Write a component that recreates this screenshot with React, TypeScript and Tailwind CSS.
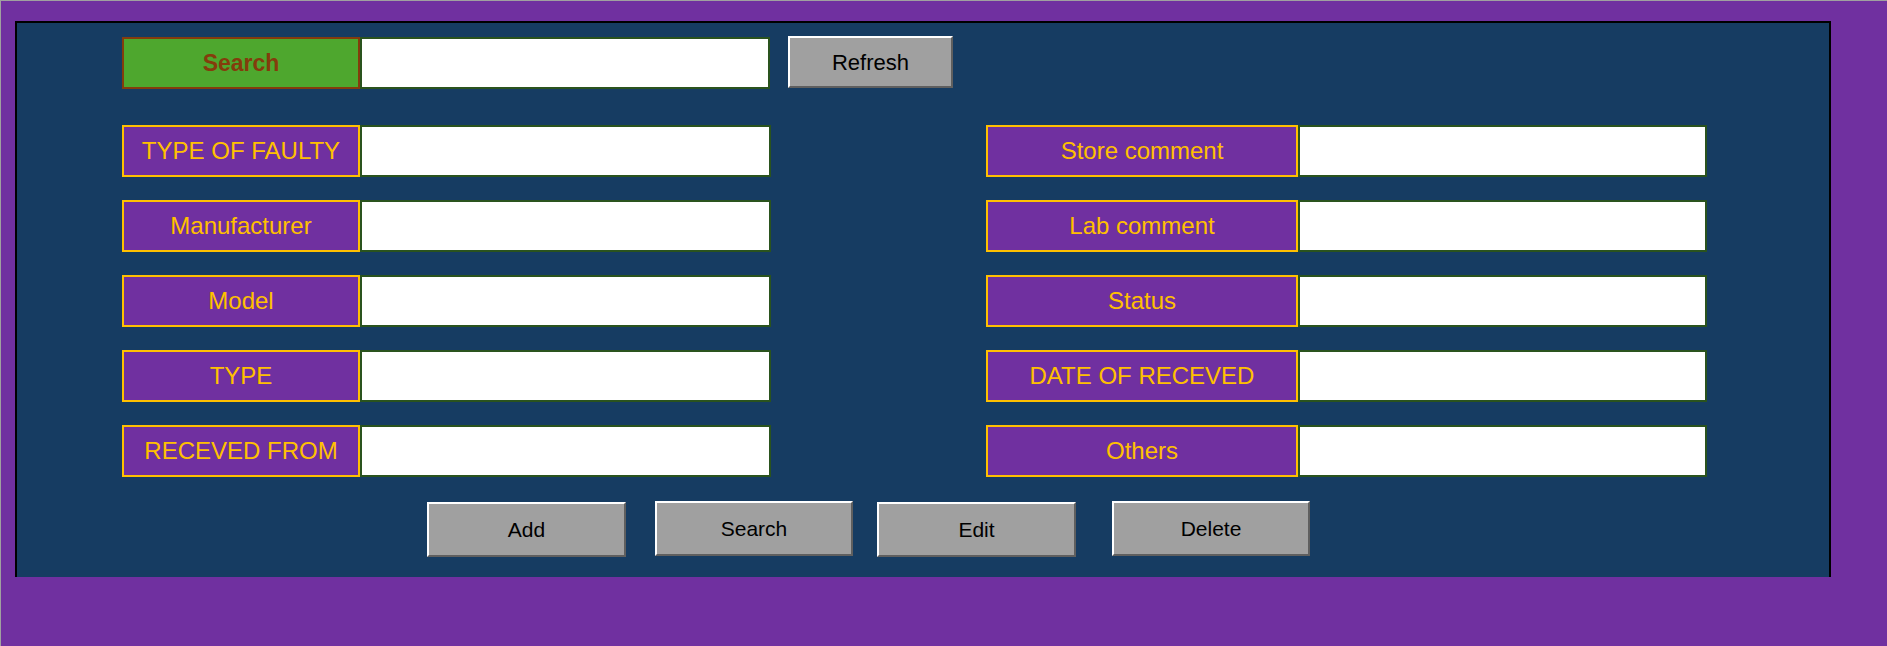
const leftFields = ["TYPE OF FAULTY", "Manufacturer", "Model", "TYPE", "RECEVED FROM"];
const rightFields = ["Store comment", "Lab comment", "Status", "DATE OF RECEVED", "Others"];

const font = { fontFamily: '"Liberation Sans", Arial, sans-serif' };

const Field = ({ label, labelWidth, inputWidth }: { label: string; labelWidth: string; inputWidth: string }) => (
  <div className="flex h-[52px]">
    <div
      className={`${labelWidth} h-full flex items-center justify-center bg-[#7030a0] border-2 border-[#ffc000] text-[24px] text-[#ffc000]`}
    >
      {label}
    </div>
    <input type="text" className={`${inputWidth} h-full bg-white border-2 border-[#2a531e] outline-none`} />
  </div>
);

const GrayButton = ({ label, className }: { label: string; className?: string }) => (
  <button
    type="button"
    className={`flex items-center justify-center bg-[#a0a0a0] border-2 border-t-white border-l-white border-r-[#5f5f5f] border-b-[#5f5f5f] text-[21px] text-black ${className ?? ""}`}
  >
    {label}
  </button>
);

export default function App() {
  return (
    <div className="w-full h-[646px] bg-[#7030a0] border-t border-l border-[#a0a0a0] overflow-hidden" style={font}>
      <div className="ml-[14px] mt-[20px] w-[1816px] h-[556px] bg-[#163c62] border-t-2 border-x-2 border-black pt-[14px] pl-[105px]">
        {/* search bar */}
        <div className="flex items-start">
          <div className="w-[238px] h-[52px] flex items-center justify-center bg-[#4ea72e] border-2 border-[#843c0c] text-[23px] font-bold text-[#843c0c]">
            Search
          </div>
          <input type="text" className="w-[410px] h-[52px] bg-white border-2 border-[#2a531e] outline-none" />
          <GrayButton label="Refresh" className="ml-[18px] -mt-px w-[165px] h-[52px] text-[22px]" />
        </div>

        {/* form fields */}
        <div className="mt-[36px] flex gap-x-[215px]">
          <div className="flex flex-col gap-[23px]">
            {leftFields.map((f) => (
              <Field key={f} label={f} labelWidth="w-[238px]" inputWidth="w-[411px]" />
            ))}
          </div>
          <div className="flex flex-col gap-[23px]">
            {rightFields.map((f) => (
              <Field key={f} label={f} labelWidth="w-[312px]" inputWidth="w-[409px]" />
            ))}
          </div>
        </div>

        {/* actions */}
        <div className="mt-[25px] flex items-start">
          <GrayButton label="Add" className="ml-[305px] w-[199px] h-[55px]" />
          <GrayButton label="Search" className="ml-[29px] -mt-px w-[198px] h-[55px]" />
          <GrayButton label="Edit" className="ml-[24px] w-[199px] h-[55px]" />
          <GrayButton label="Delete" className="ml-[36px] -mt-px w-[198px] h-[55px]" />
        </div>
      </div>
    </div>
  );
}
